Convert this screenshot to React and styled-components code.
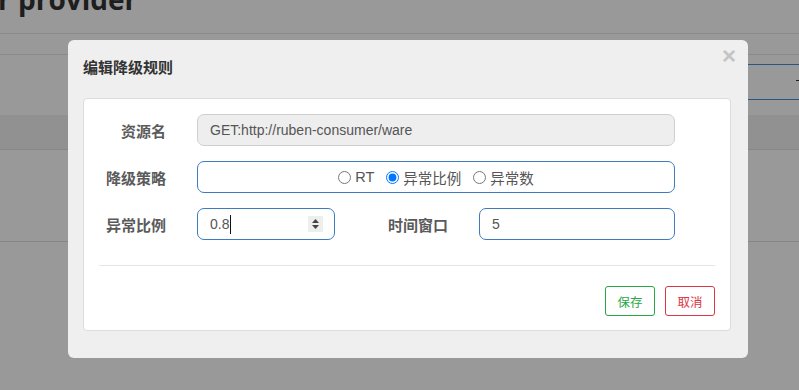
import React from "react";
import styled, { createGlobalStyle } from "styled-components";

const Global = createGlobalStyle`
  html, body { margin: 0; padding: 0; background: #fff; }
  body { font-family: "Liberation Sans", "Noto Sans CJK SC", Arial, sans-serif; color: #333; }
  * { box-sizing: border-box; }
`;

const Page = styled.div`
  width: 799px;
  height: 390px;
  overflow: hidden;
`;

const Header = styled.div`
  height: 34px;
  border-bottom: 1px solid #e6e6e6;
  overflow: hidden;
`;

const Heading = styled.h2`
  margin: -15px 0 0 -2px;
  font-family: "Open Sans", "Liberation Sans", sans-serif;
  font-size: 28px;
  line-height: 28px;
  font-weight: 700;
  color: #333;
`;

const SubBar = styled.div`
  height: 21px;
  border-bottom: 1px solid #e6e6e6;
`;

const Toolbar = styled.div`
  height: 60px;
  display: flex;
  justify-content: flex-end;
  align-items: flex-start;
  padding-top: 9px;
`;

const SearchBox = styled.div`
  width: 240px;
  height: 36px;
  margin-right: -40px;
  border-top: 1px solid #4a90d9;
  border-bottom: 1px solid #4a90d9;
  position: relative;
  &::after {
    content: "";
    position: absolute;
    left: 197px;
    top: 15px;
    width: 4px;
    height: 1px;
    background: #333;
  }
`;

const TableHead = styled.div`
  height: 35px;
  background: #f2f2f2;
  border-bottom: 1px solid #e1e1e1;
`;

const TableRow = styled.div`
  height: 92px;
  border-bottom: 1px solid #e1e1e1;
`;

const Backdrop = styled.div`
  position: fixed;
  inset: 0;
  background: rgba(0, 0, 0, 0.4);
  padding: 40px 0 0 68px;
`;

const Modal = styled.div`
  position: relative;
  width: 680px;
  height: 318px;
  background: #efefef;
  border-radius: 6px;
  padding: 0 17px 27px 15px;
  display: flex;
  flex-direction: column;
`;

const Title = styled.div`
  height: 58px;
  padding-top: 17px;
  font-family: "Noto Sans CJK SC", sans-serif;
  font-size: 15px;
  line-height: 20px;
  font-weight: 700;
  color: #333;
`;

const Close = styled.span`
  position: absolute;
  right: 12px;
  top: 3px;
  font-family: "Liberation Sans", sans-serif;
  font-size: 24px;
  font-weight: 700;
  color: #c4c4c4;
  line-height: 26px;
`;

const Panel = styled.div`
  flex: 1;
  background: #fff;
  border: 1px solid #dcdcdc;
  border-radius: 4px;
  padding: 15px 15px 14px 15px;
  display: flex;
  flex-direction: column;
`;

const Rows = styled.div`
  display: flex;
  flex-direction: column;
  gap: 15px;
`;

const Row = styled.div`
  display: flex;
  align-items: center;
  height: 32px;
`;

const Label = styled.div`
  width: 67px;
  margin-right: 31px;
  margin-left: ${(p) => p.$offset || 0}px;
  text-align: right;
  font-family: "Noto Sans CJK SC", sans-serif;
  font-size: 15px;
  font-weight: 700;
  color: #5a5a5a;
  flex-shrink: 0;
`;

const Field = styled.div`
  width: ${(p) => p.$w}px;
  height: 32px;
  border: 1px solid ${(p) => (p.$disabled ? "#cfcfcf" : "#3c7bbd")};
  background: ${(p) => (p.$disabled ? "#eeeeee" : "#fff")};
  border-radius: 7px;
  padding: 0 12px;
  display: flex;
  align-items: center;
  justify-content: ${(p) => (p.$center ? "center" : "flex-start")};
  font-size: 14px;
  color: #555;
  flex-shrink: 0;
`;

const Caret = styled.span`
  display: inline-block;
  width: 1px;
  height: 19px;
  background: #111;
  margin-left: 1px;
`;

const Spacer = styled.div`
  flex: 1;
`;

const Spinner = styled.div`
  width: 15px;
  height: 16px;
  background: #eeeeee;
  margin-right: -1px;
  display: flex;
  align-items: center;
  justify-content: center;
`;

const RadioGroup = styled.div`
  display: flex;
  align-items: center;
  font-family: "Liberation Sans", "Noto Sans CJK SC", sans-serif;
  font-size: 14.5px;
  color: #555;
`;

const RadioLabel = styled.label`
  display: flex;
  align-items: center;
  margin-right: ${(p) => p.$mr}px;
  white-space: nowrap;
`;

const RadioInput = styled.input`
  width: 13px;
  height: 13px;
  margin: 0 4px 0 0;
`;

const Divider = styled.div`
  height: 1px;
  background: #e5e5e5;
  margin-top: 25px;
`;

const Footer = styled.div`
  display: flex;
  justify-content: flex-end;
  gap: 10px;
  margin-top: 20px;
`;

const Button = styled.button`
  width: 50px;
  height: 30px;
  background: #fff;
  border: 1px solid ${(p) => p.$color};
  color: ${(p) => p.$color};
  border-radius: 3px;
  font-family: "Noto Sans CJK SC", sans-serif;
  font-size: 12.5px;
  padding: 0;
  cursor: pointer;
`;

export default function App() {
  return (
    <>
      <Global />
      <Page>
        <Header>
          <Heading>r provider</Heading>
        </Header>
        <SubBar />
        <Toolbar>
          <SearchBox />
        </Toolbar>
        <TableHead />
        <TableRow />
      </Page>
      <Backdrop>
        <Modal>
          <Title>编辑降级规则</Title>
          <Close>×</Close>
          <Panel>
            <Rows>
              <Row>
                <Label>资源名</Label>
                <Field $w={478} $disabled>GET:http://ruben-consumer/ware</Field>
              </Row>
              <Row>
                <Label>降级策略</Label>
                <Field $w={478} $center>
                  <RadioGroup>
                    <RadioLabel $mr={12}>
                      <RadioInput type="radio" name="grade" readOnly />
                      RT
                    </RadioLabel>
                    <RadioLabel $mr={12}>
                      <RadioInput type="radio" name="grade" defaultChecked />
                      异常比例
                    </RadioLabel>
                    <RadioLabel $mr={0}>
                      <RadioInput type="radio" name="grade" readOnly />
                      异常数
                    </RadioLabel>
                  </RadioGroup>
                </Field>
              </Row>
              <Row>
                <Label>异常比例</Label>
                <Field $w={138}>
                  0.8
                  <Caret />
                  <Spacer />
                  <Spinner>
                    <svg width="9" height="12" viewBox="0 0 9 12">
                      <path d="M4.5 1 L8 5 L1 5 Z" fill="#444" />
                      <path d="M4.5 11 L8 7 L1 7 Z" fill="#444" />
                    </svg>
                  </Spinner>
                </Field>
                <Label $offset={46}>时间窗口</Label>
                <Field $w={196}>5</Field>
              </Row>
            </Rows>
            <Divider />
            <Footer>
              <Button $color="#28a745">保存</Button>
              <Button $color="#dc3545">取消</Button>
            </Footer>
          </Panel>
        </Modal>
      </Backdrop>
    </>
  );
}
